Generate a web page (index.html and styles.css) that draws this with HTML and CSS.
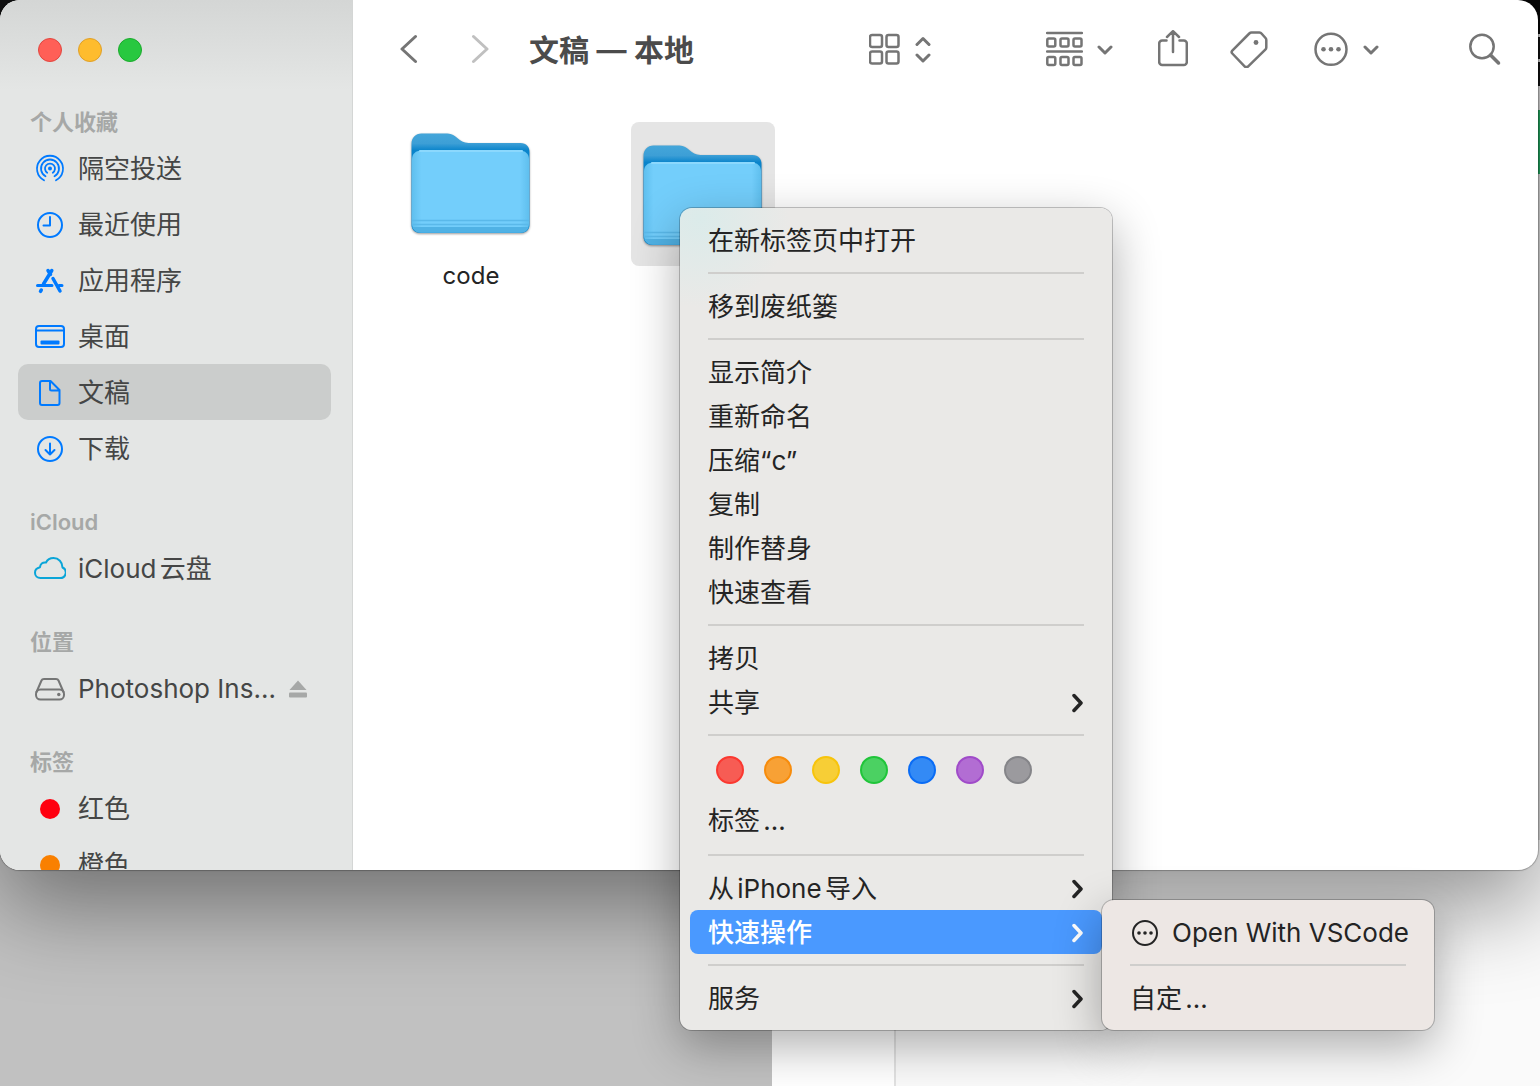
FILE: index.html
```html
<!DOCTYPE html>
<html lang="zh-CN">
<head>
<meta charset="utf-8">
<title>文稿 — 本地</title>
<meta name="viewport" content="width=device-width, initial-scale=1">
<link rel="stylesheet" href="styles.css">
</head>
<body>
<svg class="defs" width="0" height="0" aria-hidden="true">
  <defs>
    <linearGradient id="folder-back" x1="0" y1="0" x2="0" y2="1">
      <stop offset="0" stop-color="#44a6da"/>
      <stop offset=".1" stop-color="#3d9fd6"/>
      <stop offset=".17" stop-color="#0a84cb"/>
      <stop offset="1" stop-color="#0a84cb"/>
    </linearGradient>
    <linearGradient id="folder-front" x1="0" y1="0" x2="1" y2="0">
      <stop offset="0" stop-color="#5fbfee"/>
      <stop offset=".08" stop-color="#73cefb"/>
      <stop offset=".92" stop-color="#73cefb"/>
      <stop offset="1" stop-color="#5fbfee"/>
    </linearGradient>
    <symbol id="folder" viewBox="0 0 144 144">
      <path d="M12.500 34c0-6 4-10.500 10-10.500h26c9 0 11 9.500 21 9.500h52c6 0 9 4 9 9V115c0 5-4 8-9 8h-100c-5 0-9-3-9-8z" fill="url(#folder-back)"/>
      <path d="M13 49c0-5 4-8.500 9-8.500h99c5 0 9 3.500 9 8.500v65c0 5-4 8.500-9 8.500h-99c-5 0-9-3.500-9-8.500z" fill="url(#folder-front)"/>
      <path d="M21 41h102" stroke="#8bd8fd"/>
      <path d="M13.500 110.500h116M13.500 114.500h116" stroke="#5ab9ea" stroke-width="1.500"/>
      <path d="M13.500 117h116c-1 4-4 5.500-8 5.500h-100c-4 0-7-2-8-5.500z" fill="#50b2e5"/>
    </symbol>
    <symbol id="chevron-down" viewBox="0 0 16 38">
      <path d="M2 17l6 6 6-6"/>
    </symbol>
    <symbol id="chevron-right" viewBox="0 0 12 20">
      <path d="M2 2.500L9 10l-7 7.500"/>
    </symbol>
  </defs>
</svg>

<div class="desktop">
  <div class="window">
    <aside class="sidebar">
      <div class="lights">
        <button class="light close" type="button" aria-label="关闭"></button>
        <button class="light minimize" type="button" aria-label="最小化"></button>
        <button class="light zoom" type="button" aria-label="缩放"></button>
      </div>
      <nav class="places">
        <h2>个人收藏</h2>
        <ul>
          <li><a href="#airdrop">
            <svg viewBox="0 0 32 32" width="32" height="32"><circle cx="16" cy="15.500" r="1" fill="currentColor"/><path d="M13.200 19.700a5 5 0 1 1 5.600 0M11.500 23.300a9 9 0 1 1 9 0M10 27.300a13 13 0 1 1 12 0" stroke-width="1.800"/></svg>
            <span>隔空投送</span></a></li>
          <li><a href="#recents">
            <svg viewBox="0 0 32 32" width="32" height="32"><circle cx="16" cy="16" r="12"/><path d="M16 8v8.500H9.500"/></svg>
            <span>最近使用</span></a></li>
          <li><a href="#applications">
            <svg viewBox="0 0 32 32" width="32" height="32"><path d="M17.800 5.500L9.500 19M14 5.500l2.500 4" stroke-width="3.500"/><path d="M3.500 20.500h14.500M25 20.500h3" stroke-width="3"/><path d="M19 13.500L26 26M7.300 25L6.500 26.300" stroke-width="3.500"/></svg>
            <span>应用程序</span></a></li>
          <li><a href="#desktop">
            <svg viewBox="0 0 32 32" width="32" height="32"><rect x="2" y="5" width="28" height="21" rx="3"/><path d="M2 9.500h28"/><rect x="6.500" y="19.500" width="19" height="4" rx="1" fill="currentColor" stroke="none"/></svg>
            <span>桌面</span></a></li>
          <li><a href="#documents" aria-current="page">
            <svg viewBox="0 0 32 32" width="32" height="32"><path d="M8 4h8.500L25.500 13v13a2 2 0 0 1-2 2H8a2 2 0 0 1-2-2V6a2 2 0 0 1 2-2zM16 4.500V12a1.500 1.500 0 0 0 1.500 1.500h7.500"/></svg>
            <span>文稿</span></a></li>
          <li><a href="#downloads">
            <svg viewBox="0 0 32 32" width="32" height="32"><circle cx="16" cy="16" r="12"/><path d="M16 10.500v11M11.500 17l4.500 4.500 4.500-4.500"/></svg>
            <span>下载</span></a></li>
        </ul>
        <h2>iCloud</h2>
        <ul>
          <li><a href="#icloud" class="cloud">
            <svg viewBox="0 0 32 32" width="32" height="32"><path d="M6.500 25h19.500a5.500 5.500 0 0 0 2.500-10.500C28.500 9 24.500 5 19.500 5c-3.600 0-6.200 1.800-7.500 4.500-3.500-.5-5.800 1.500-6 4.800C3 15 1 17 1 19.700 1 22.700 3.300 25 6.500 25z"/></svg>
            <span>iCloud云盘</span></a></li>
        </ul>
        <h2>位置</h2>
        <ul>
          <li><a href="#photoshop" class="drive">
            <svg viewBox="0 0 32 32" width="32" height="32"><path d="M2.500 19L7.500 7.500C8 6.300 9 6 10 6h12c1 0 2 .300 2.500 1.500L29.500 19"/><rect x="2" y="16.500" width="28" height="10" rx="4.500"/><circle cx="24.800" cy="21.500" r="1.700" fill="currentColor" stroke="none"/></svg>
            <span>Photoshop Ins...</span></a>
            <button class="eject" type="button" aria-label="推出">
              <svg viewBox="0 0 18 18" width="18" height="18"><path d="M9 .5L17.500 10H.5z"/><rect y="12.500" width="18" height="5" rx="1"/></svg>
            </button></li>
        </ul>
        <h2>标签</h2>
        <ul>
          <li><a href="#red"><i class="tag red"></i><span>红色</span></a></li>
          <li><a href="#orange"><i class="tag orange"></i><span>橙色</span></a></li>
        </ul>
      </nav>
    </aside>

    <main class="content">
      <header class="toolbar">
        <button type="button" class="back" aria-label="返回">
          <svg viewBox="0 0 18 38" width="18" height="38"><path d="M15.500 6.500L2 19l13.500 12.500"/></svg>
        </button>
        <button type="button" class="forward" aria-label="前进" disabled>
          <svg viewBox="0 0 18 38" width="18" height="38"><path d="M2.500 6.500L16 19 2.500 31.500"/></svg>
        </button>
        <h1>文稿 — 本地</h1>
        <button type="button" class="view" aria-label="显示方式">
          <svg viewBox="0 0 31 38" width="31" height="38"><rect x="1" y="5" width="12" height="12" rx="2"/><rect x="17.500" y="5" width="12" height="12" rx="2"/><rect x="1" y="21.500" width="12" height="12" rx="2"/><rect x="17.500" y="21.500" width="12" height="12" rx="2"/></svg>
          <svg viewBox="0 0 16 38" width="16" height="38" class="bold"><path d="M2 14.500L8 8.500l6 6M2 25l6 6 6-6"/></svg>
        </button>
        <button type="button" class="group" aria-label="分组">
          <svg viewBox="0 0 37 38" width="37" height="38"><path d="M1 3h35M1 21.500h35"/><rect x="1.300" y="8.500" width="8" height="8" rx="1.500"/><rect x="14.500" y="8.500" width="8" height="8" rx="1.500"/><rect x="27.500" y="8.500" width="8" height="8" rx="1.500"/><rect x="1.300" y="27" width="8" height="8" rx="1.500"/><rect x="14.500" y="27" width="8" height="8" rx="1.500"/><rect x="27.500" y="27" width="8" height="8" rx="1.500"/></svg>
          <svg width="16" height="38" class="bold"><use href="#chevron-down"/></svg>
        </button>
        <button type="button" class="share" aria-label="共享">
          <svg viewBox="0 0 30 38" width="30" height="38"><path d="M8.500 10.500H4.200a3 3 0 0 0-3 3v18.500a3 3 0 0 0 3 3h21.600a3 3 0 0 0 3-3V13.500a3 3 0 0 0-3-3h-4.300M15 22V1.500M9 7l6-5.800L21 7"/></svg>
        </button>
        <button type="button" class="label" aria-label="标签">
          <svg viewBox="0 0 38 38" width="38" height="38"><path d="M21.500 2.500h8c1 0 1.500.3 2 1l4 4.500c.5.600.8 1.200.8 2v7.500c0 1-.3 1.500-1 2.200L18.200 36.300c-1.200 1.200-2.400 1.200-3.600 0L2.300 23.500c-1-1-1-1.800 0-2.800L19.300 3.500c.8-.8 1.200-1 2.200-1z"/><circle cx="26" cy="12.500" r="2.400" fill="currentColor" stroke="none"/></svg>
        </button>
        <button type="button" class="more" aria-label="更多">
          <svg viewBox="0 0 34 38" width="34" height="38"><circle cx="17" cy="19.300" r="15.500"/><g fill="currentColor" stroke="none"><circle cx="9.500" cy="19.300" r="2.300"/><circle cx="17" cy="19.300" r="2.300"/><circle cx="24.500" cy="19.300" r="2.300"/></g></svg>
          <svg width="16" height="38" class="bold"><use href="#chevron-down"/></svg>
        </button>
        <button type="button" class="search" aria-label="搜索">
          <svg viewBox="0 0 32 38" width="32" height="38"><circle cx="13" cy="16.500" r="11.700"/><path d="M21.500 25l8 8" stroke-width="3.500"/></svg>
        </button>
      </header>

      <div class="files">
        <figure class="file">
          <svg><use href="#folder"/></svg>
          <figcaption>code</figcaption>
        </figure>
        <figure class="file selected">
          <svg><use href="#folder"/></svg>
          <figcaption>c</figcaption>
        </figure>
      </div>
    </main>
  </div>

  <ul class="menu context">
    <li><button type="button">在新标签页中打开</button></li>
    <li class="rule"></li>
    <li><button type="button">移到废纸篓</button></li>
    <li class="rule"></li>
    <li><button type="button">显示简介</button></li>
    <li><button type="button">重新命名</button></li>
    <li><button type="button">压缩“c”</button></li>
    <li><button type="button">复制</button></li>
    <li><button type="button">制作替身</button></li>
    <li><button type="button">快速查看</button></li>
    <li class="rule"></li>
    <li><button type="button">拷贝</button></li>
    <li><button type="button">共享<svg class="arrow"><use href="#chevron-right"/></svg></button></li>
    <li class="rule"></li>
    <li class="colors">
      <button type="button" class="dot red" aria-label="红色"></button>
      <button type="button" class="dot orange" aria-label="橙色"></button>
      <button type="button" class="dot yellow" aria-label="黄色"></button>
      <button type="button" class="dot green" aria-label="绿色"></button>
      <button type="button" class="dot blue" aria-label="蓝色"></button>
      <button type="button" class="dot purple" aria-label="紫色"></button>
      <button type="button" class="dot gray" aria-label="灰色"></button>
    </li>
    <li class="tags"><button type="button">标签...</button></li>
    <li class="rule"></li>
    <li><button type="button">从iPhone导入<svg class="arrow"><use href="#chevron-right"/></svg></button></li>
    <li class="open"><button type="button" class="active" aria-expanded="true">快速操作<svg class="arrow"><use href="#chevron-right"/></svg></button>
      <ul class="menu submenu">
        <li><button type="button">
          <svg class="workflow" viewBox="0 0 30 30" width="30" height="30"><circle cx="15" cy="15" r="12"/><g fill="currentColor" stroke="none"><circle cx="9" cy="15" r="1.800"/><circle cx="15" cy="15" r="1.800"/><circle cx="21" cy="15" r="1.800"/></g></svg>
          Open With VSCode</button></li>
        <li class="rule"></li>
        <li><button type="button">自定...</button></li>
      </ul>
    </li>
    <li class="rule"></li>
    <li><button type="button">服务<svg class="arrow"><use href="#chevron-right"/></svg></button></li>
  </ul>
</div>
</body>
</html>
```
FILE: styles.css
```css
* {
  box-sizing: border-box;
}

body {
  margin: 0;
  font-family: Inter, "Noto Sans CJK SC", sans-serif;
  font-size: 26px;
  line-height: 32px;
  text-autospace: normal;
}

button {
  margin: 0;
  padding: 0;
  border: 0;
  background: none;
  font: inherit;
  color: inherit;
}

ul {
  margin: 0;
  padding: 0;
  list-style: none;
}

svg {
  flex: none;
  fill: none;
  stroke: currentColor;
  stroke-width: 2;
  stroke-linecap: round;
  stroke-linejoin: round;
}

.defs {
  position: absolute;
}

/* Desktop with the windows that lie behind Finder */
.desktop {
  position: relative;
  min-height: 100vh;
  overflow: hidden;
  background:
    linear-gradient(#060606 34px, #c8c8c8 34px 37px, #111 37px 59px, #c8c8c8 59px 62px, #111 62px 86px, #d8d8d8 86px 110px, #23a860 110px 174px, #dcdcdc 174px) right top / 24px 840px no-repeat,
    linear-gradient(to right, #c1c1c1 772px, #fff 772px 894px, #e2e2e2 894px 896px, #fafafa 896px) 0 100% / 100% 260px no-repeat,
    #111;
}

.window {
  display: grid;
  grid-template-columns: 353px 1fr;
  height: calc(100vh - 216px);
  margin-right: 2px;
  overflow: hidden;
  border-radius: 20px;
  background: #fff;
  box-shadow: 0 0 1px 1px rgba(0, 0, 0, .25), 0 36px 90px rgba(0, 0, 0, .42);
}

/* Sidebar */
.sidebar {
  overflow: hidden;
  border-right: 1px solid #d4d6d5;
  background: linear-gradient(#d4d6d5, #e4e6e5 90px);
  color: #454646;
}

.lights {
  display: flex;
  gap: 16px;
  height: 104px;
  padding: 38px;
}

.light {
  width: 24px;
  height: 24px;
  border: 1px solid;
  border-radius: 50%;
}

.close {
  border-color: #e2463f;
  background: #ff5f57;
}

.minimize {
  border-color: #e0a028;
  background: #febc2e;
}

.zoom {
  border-color: #1aab2c;
  background: #28c840;
}

.places h2 {
  margin: 0;
  padding: 30px 30px 2px;
  font-size: 22px;
  font-weight: 600;
  color: #a6a8a7;
}

.places h2:first-child {
  padding-top: 2px;
}

.places ul {
  padding: 0 21px 0 18px;
}

.places li {
  display: flex;
  align-items: center;
}

.places a {
  display: flex;
  flex: 1;
  align-items: center;
  gap: 12px;
  min-width: 0;
  height: 56px;
  padding: 2px 0 0 16px;
  border-radius: 10px;
  color: inherit;
  text-decoration: none;
  white-space: nowrap;
}

.places a[aria-current] {
  background: #cbcdcc;
}

.places a svg {
  color: #007aff;
}

.places .cloud svg {
  color: #0aa5d8;
}

.places .drive svg {
  color: #757676;
}

.tag {
  width: 20px;
  height: 20px;
  margin: 0 6px;
  border-radius: 50%;
}

.tag.red {
  background: #ff0010;
}

.tag.orange {
  background: #f98000;
}

.eject {
  display: flex;
  padding-top: 2px;
  margin-right: 24px;
}

.eject svg {
  fill: #a6a8a7;
  stroke: none;
}

/* Toolbar */
.toolbar {
  display: flex;
  align-items: center;
  height: 98px;
  padding: 0 37px 0 47px;
  color: #757575;
}

.toolbar button {
  display: flex;
}

.toolbar svg {
  stroke-width: 2.5;
}

.toolbar .forward {
  margin-left: 53px;
  color: #c0c0c0;
}

.toolbar h1 {
  flex: 1;
  margin: 0;
  padding: 2px 0 0 40px;
  font-size: 30px;
  font-weight: 600;
  color: #4b4b4b;
  white-space: nowrap;
}

.toolbar .back svg,
.toolbar .forward svg,
.toolbar .bold {
  stroke-width: 3;
}

.view,
.more {
  gap: 15px;
}

.toolbar .group {
  gap: 14px;
  margin-left: 115px;
}

.toolbar .share {
  margin-left: 45px;
}

.toolbar .label {
  margin-left: 42px;
}

.toolbar .more {
  margin-left: 46px;
}

.toolbar .search {
  margin-left: 90px;
}

/* Files */
.files {
  display: flex;
  align-items: flex-start;
  gap: 88px;
  padding: 12px 46px;
}

.file {
  width: 144px;
  margin: 0;
  font-size: 24px;
  text-align: center;
  color: #242424;
}

.file svg {
  display: block;
  width: 144px;
  height: 144px;
  border-radius: 8px;
  stroke: none;
}

.file use {
  filter: drop-shadow(0 1px 1px rgba(0, 0, 0, .4));
}

.file figcaption {
  padding-top: 6px;
}

.file.selected {
  margin-top: 12px;
}

.file.selected svg {
  background: #e5e5e5;
}

/* Menus */
.menu {
  position: absolute;
  padding: 10px;
  border-radius: 12px;
  background: #eae9e7;
  box-shadow: 0 0 0 1px rgba(0, 0, 0, .22), 0 16px 48px rgba(0, 0, 0, .32);
  color: #242424;
}

.context {
  top: 208px;
  left: 680px;
  width: 432px;
  background: radial-gradient(circle at 20px 10px, #dbebea, #eae9e7 90px);
}

.menu li > button:not(.dot) {
  display: flex;
  align-items: center;
  width: 100%;
  height: 44px;
  padding: 2px 18px 0;
  border-radius: 8px;
  text-align: left;
  white-space: nowrap;
}

.rule {
  height: 22px;
  padding: 10px 18px;
}

.rule::before {
  content: "";
  display: block;
  height: 2px;
  background: #cfcecc;
}

.arrow {
  width: 12px;
  height: 20px;
  margin-left: auto;
  stroke-width: 3.5;
}

.colors {
  display: flex;
  gap: 20px;
  padding: 10px 26px 14px;
}

.dot {
  width: 28px;
  height: 28px;
  border: 2px solid;
  border-radius: 50%;
}

.dot.red {
  border-color: #fb3830;
  background: #f75c54;
}

.dot.orange {
  border-color: #f78c0c;
  background: #f8a135;
}

.dot.yellow {
  border-color: #f7c40c;
  background: #f7ce36;
}

.dot.green {
  border-color: #20c53a;
  background: #4bd162;
}

.dot.blue {
  border-color: #0a6cf5;
  background: #338af5;
}

.dot.purple {
  border-color: #a04bc9;
  background: #b26dd3;
}

.dot.gray {
  border-color: #858589;
  background: #9b9a9e;
}

.tags {
  padding-bottom: 2px;
}

.open {
  position: relative;
}

.menu li > .active:not(.dot) {
  background: #4a99ff;
  font-weight: 500;
  color: #fff;
}

.submenu {
  top: -10px;
  left: 100%;
  width: 332px;
  background: #ede7e4;
}

.workflow {
  margin-right: 12px;
}
```
